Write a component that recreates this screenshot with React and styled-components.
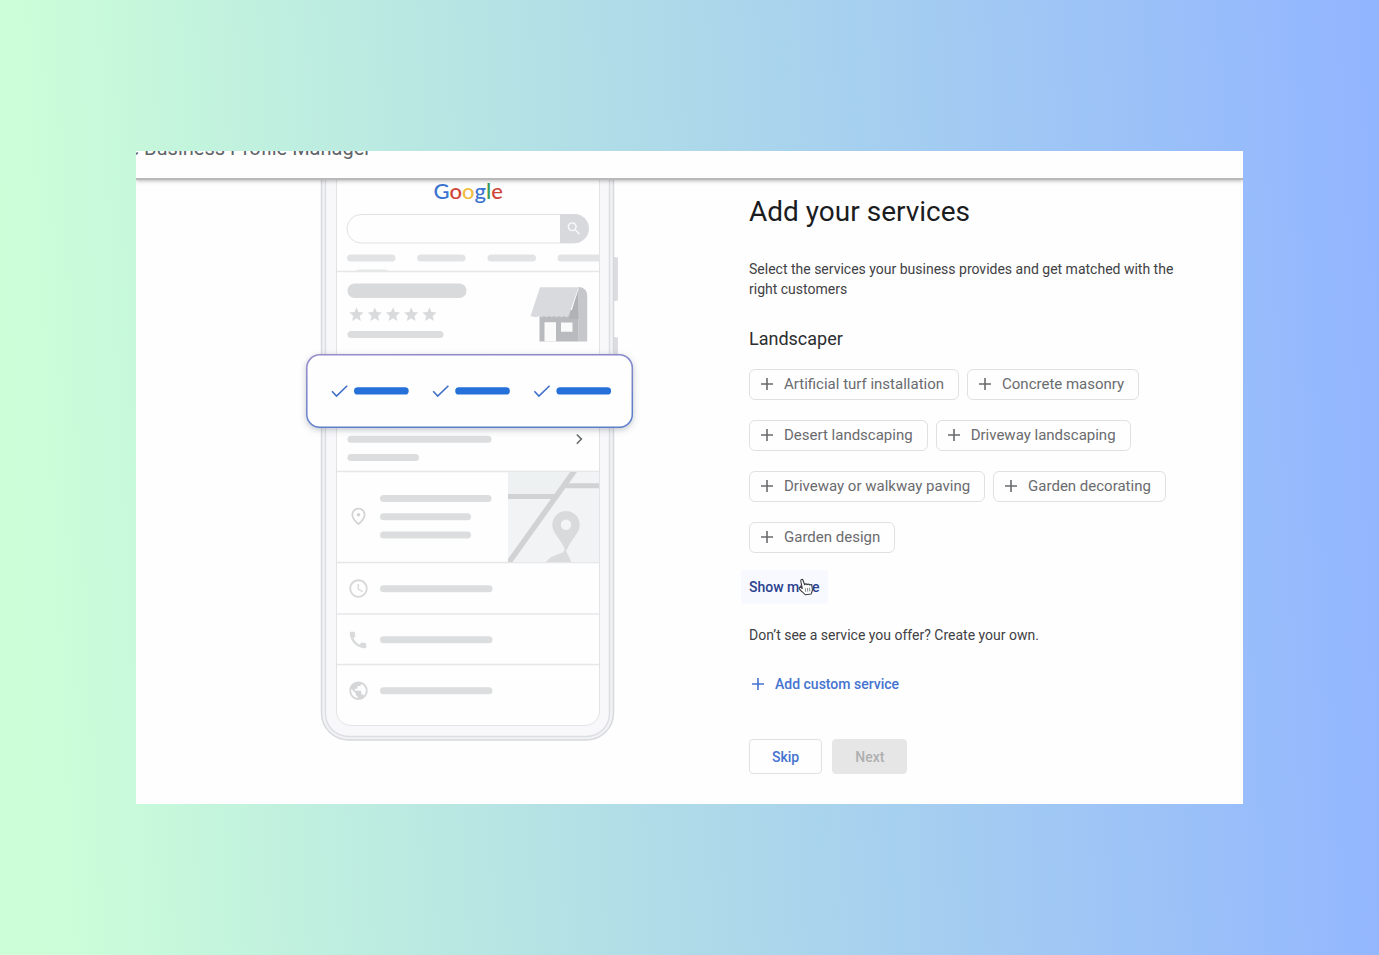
import React from "react";
import styled, { createGlobalStyle, css } from "styled-components";
import { MdPublic, MdCall, MdAccessTime, MdOutlinePlace, MdSearch, MdStar } from "react-icons/md";

const GlobalStyle = createGlobalStyle`
  *, *::before, *::after { box-sizing: border-box; }
  body { margin: 0; font-family: Roboto, "Liberation Sans", sans-serif; }
  button { font: inherit; }
`;

const Page = styled.div`
  min-height: 100vh;
  display: flex;
  align-items: center;
  justify-content: center;
  padding: 32px 136px;
  background: linear-gradient(87deg, #ccffd8 0%, #ccffd8 3%, #b0dde7 45%, #92b5ff 99%);
`;

const Frame = styled.div`
  width: 100%;
  display: flex;
  flex-direction: column;
  overflow: hidden;
  background: #fefefe;
`;

const Header = styled.header`
  position: relative;
  z-index: 1;
  height: 29px;
  display: flex;
  align-items: flex-start;
  background: #fefefe;
  border-bottom: 2px solid #b9b9b9;
  box-shadow: 0 1px 4px rgba(0, 0, 0, 0.28);
`;

const Brand = styled.div`
  margin: -15px 0 0 -60px;
  font-size: 20px;
  line-height: 24px;
  color: #5f6368;
  white-space: nowrap;
`;

const Body = styled.main`
  display: grid;
  grid-template-columns: minmax(0, 1fr) 494px;
`;

const Preview = styled.aside`
  display: flex;
  justify-content: center;
  align-items: flex-start;
  padding-left: 54px;
`;

const Art = styled.svg`
  display: block;
  width: 340px;
  height: 572px;
`;

const Panel = styled.section`
  display: flex;
  flex-direction: column;
  align-items: flex-start;
  padding: 14px 56px 30px 0;
`;

const Title = styled.h1`
  margin: 0;
  font-size: 28px;
  line-height: 36px;
  font-weight: 400;
  color: #1b1c1e;
`;

const Text = styled.p`
  margin: 0;
  font-size: 14px;
  line-height: 20px;
  color: #3f4144;
`;

const Intro = styled(Text)`
  margin-top: 29px;
`;

const Category = styled.h2`
  margin: 28px 0 18px;
  font-size: 18px;
  line-height: 24px;
  font-weight: 400;
  color: #2c2d30;
`;

const ChipList = styled.ul`
  display: flex;
  flex-wrap: wrap;
  gap: 20px 8px;
  width: 100%;
  margin: 0;
  padding: 0;
  list-style: none;
`;

const Chip = styled.button`
  display: flex;
  align-items: center;
  gap: 10px;
  height: 31px;
  padding: 0 14px 1px 10px;
  border: 1px solid #dfe0e2;
  border-radius: 6px;
  background: transparent;
  color: #6a6b6e;
  font-size: 15px;
  line-height: 20px;
  white-space: nowrap;
`;

const PlusMark = styled.svg`
  width: 14px;
  height: 14px;
  flex: none;
  fill: none;
  stroke: currentColor;
  stroke-width: 1.6;
`;

const textButton = css`
  display: flex;
  align-items: center;
  border: 0;
  background: transparent;
  font-size: 14px;
  line-height: 20px;
  font-weight: 500;
`;

const ShowMore = styled.button`
  ${textButton}
  position: relative;
  height: 34px;
  margin: 17px 0 21px -8px;
  padding: 0 8px;
  border-radius: 4px;
  background: #f8f9fe;
  color: #2a4190;
`;

const Pointer = styled.svg`
  position: absolute;
  left: 57px;
  top: 8px;
  width: 16px;
  height: 18px;
`;

const AddCustom = styled.button`
  ${textButton}
  gap: 10px;
  height: 34px;
  margin: 22px 0 38px;
  padding: 0 2px;
  color: #4573cf;
`;

const Actions = styled.div`
  display: flex;
  gap: 10px;
`;

const Action = styled.button`
  height: 35px;
  padding: 0 22px;
  border: 1px solid ${(p) => (p.disabled ? "#e6e6e6" : "#dfe1e5")};
  border-radius: 4px;
  background: ${(p) => (p.disabled ? "#e6e6e6" : "transparent")};
  color: ${(p) => (p.disabled ? "#aeafb0" : "#4573cf")};
  font-size: 14px;
  line-height: 20px;
  font-weight: 500;
`;

const services = [
  "Artificial turf installation",
  "Concrete masonry",
  "Desert landscaping",
  "Driveway landscaping",
  "Driveway or walkway paving",
  "Garden decorating",
  "Garden design",
];

const Plus = () => (
  <PlusMark viewBox="0 0 14 14" aria-hidden="true">
    <path d="M7 1v12M1 7h12" />
  </PlusMark>
);

const Pill = ({ x, y, w, h = 7, fill = "#dcddde" }) => (
  <rect x={x} y={y} width={w} height={h} rx={h / 2} fill={fill} />
);

function PhoneIllustration() {
  return (
    <Art viewBox="300 180 340 572" role="img" aria-label="Business profile preview on a phone">
      <defs>
        <clipPath id="screen">
          <rect x="337" y="140" width="262" height="585" rx="14" />
        </clipPath>
        <clipPath id="map">
          <rect x="508" y="472" width="91" height="90" />
        </clipPath>
        <linearGradient id="cardEdge" x1="0" y1="0" x2="0.3" y2="1">
          <stop offset="0" stopColor="#9a8ccb" />
          <stop offset="1" stopColor="#5c7ecb" />
        </linearGradient>
        <filter id="cardShadow" x="-10%" y="-30%" width="120%" height="170%">
          <feDropShadow dx="0" dy="2" stdDeviation="3" floodColor="#5f6b7c" floodOpacity="0.38" />
        </filter>
      </defs>

      <rect x="612" y="257" width="6" height="44" rx="2" fill="#dcdde0" />
      <rect x="612" y="337" width="6" height="44" rx="2" fill="#dcdde0" />
      <rect x="321.5" y="130" width="292" height="610" rx="27" fill="#f1f2f4" stroke="#d7d8dc" strokeWidth="1.4" />
      <rect x="325.5" y="130" width="284" height="606.5" rx="23" fill="#f8f8fa" stroke="#dddee2" strokeWidth="1.4" />
      <rect x="336.5" y="130" width="263" height="595.5" rx="14" fill="#fefefe" stroke="#e2e3e6" />

      <text x="433.5" y="199" fontFamily="Lato, sans-serif" fontSize="22" fontWeight="500">
        <tspan fill="#3b74d0">G</tspan>
        <tspan fill="#cf4436">o</tspan>
        <tspan fill="#efbd3f">o</tspan>
        <tspan fill="#3b74d0">g</tspan>
        <tspan fill="#3c9a55">l</tspan>
        <tspan fill="#cf4436">e</tspan>
      </text>

      <rect x="347" y="214.5" width="241" height="28.5" rx="14.2" fill="#fefefe" stroke="#e1e2e4" />
      <path d="M560 214h14.5a14.5 14.5 0 0 1 0 29H560z" fill="#d8d9dc" />
      <MdSearch x={565.5} y={220} size={17} color="#fafafa" />

      <g clipPath="url(#screen)">
        <Pill x={347} y={254.5} w={48.5} fill="#e2e3e4" />
        <Pill x={417} y={254.5} w={48.5} fill="#e2e3e4" />
        <Pill x={487.5} y={254.5} w={48.5} fill="#e2e3e4" />
        <Pill x={557.5} y={254.5} w={52} fill="#e2e3e4" />
        <path d="M355 271.500q1-2 4-2h26q3 0 4 2z" fill="#e6e7e8" />
        <path
          d="M337 271.500h262M337 471.500h262M337 562.500h262M337 614h262M337 664.500h262"
          stroke="#e6e7e9"
          strokeWidth="1.4"
        />
      </g>

      <Pill x={347.5} y={283.5} w={119} h={14.5} fill="#d9dadb" />
      {[356.5, 374.8, 393, 411.2, 429.5].map((cx) => (
        <MdStar key={cx} x={cx - 8.5} y={306} size={17} color="#d9dadc" />
      ))}
      <Pill x={347.5} y={331} w={96} />

      <path d="M539.500 310h39v31.500h-39z" fill="#b9babd" />
      <path d="M578.500 287h1a8 8 0 0 1 7.700 8v46.500h-9z" fill="#c6c7ca" />
      <path d="M578.500 289v30h-9.500z" fill="#b1b2b5" />
      <path
        d="M540 287.300h38.500l-10 29-2 1-2.500-1.200-2.500 1.200-2.500-1.200-2.500 1.200-2.500-1.200-2.500 1.200-2.500-1.200-2.500 1.200-2.500-1.200-2.500 1.200-2.500-1.200-2.500 1.200-6-1z"
        fill="#d9dadd"
      />
      <path d="M544.500 322.300H556v19.200h-11.500zM561 322.600h11.500v9.200H561z" fill="#fafafb" />

      <rect
        x="306.800"
        y="354.800"
        width="325.500"
        height="72.500"
        rx="13"
        fill="#fefefe"
        stroke="url(#cardEdge)"
        strokeWidth="1.5"
        filter="url(#cardShadow)"
      />
      {[0, 101.2, 202.4].map((dx) => (
        <g key={dx} transform={`translate(${dx} 0)`}>
          <path d="M332 391.300l4.500 4.800 10.700-10.400" fill="none" stroke="#4170c8" strokeWidth="1.6" />
          <Pill x={354} y={387.2} w={54.7} h={7.4} fill="#2571d9" />
        </g>
      ))}

      <Pill x={347.5} y={435.7} w={144} />
      <path d="M576.800 434.500l4.600 4.600-4.600 4.600" fill="none" stroke="#6b6c6e" strokeWidth="1.6" />
      <Pill x={347.5} y={454} w={71.5} />

      <g clipPath="url(#map)">
        <rect x="508" y="472" width="91" height="90" fill="#f2f3f5" />
        <path d="M508 472h64l-19 26h-45z" fill="#edf1f2" />
        <path d="M508 496.500h46M566 485.800h34" stroke="#d1d2d4" strokeWidth="5" />
        <path d="M507 565L575 470" stroke="#d1d2d4" strokeWidth="5.5" />
        <path d="M546 562q4-6 17-9.500l2.500-4.500 1 4 5 10z" fill="#dadbdd" />
        <path
          d="M566 511a13.700 13.700 0 0 1 13.700 13.700c0 8.500-8.500 14-12.700 25h-2c-4.200-11-12.700-16.500-12.700-25A13.700 13.700 0 0 1 566 511z"
          fill="#d9dadc"
        />
        <circle cx="566" cy="524.800" r="5.200" fill="#f4f5f6" />
      </g>

      <MdOutlinePlace x={348} y={506} size={21} color="#d2d3d5" />
      <Pill x={380} y={495} w={111.5} />
      <Pill x={380} y={513.3} w={91} />
      <Pill x={380} y={531.5} w={91} />
      <MdAccessTime x={347.5} y={577.5} size={22} color="#d7d8da" />
      <Pill x={380} y={585.3} w={112.5} />
      <MdCall x={347} y={629} size={22} color="#d9dadb" />
      <Pill x={380} y={636.3} w={112.5} />
      <MdPublic x={347.5} y={679.7} size={22} color="#d5d6d8" />
      <Pill x={380} y={687.3} w={112.5} />
    </Art>
  );
}

export default function App() {
  return (
    <>
      <GlobalStyle />
      <Page>
        <Frame>
          <Header>
            <Brand>Google Business Profile Manager</Brand>
          </Header>
          <Body>
            <Preview>
              <PhoneIllustration />
            </Preview>
            <Panel>
              <Title>Add your services</Title>
              <Intro>
                Select the services your business provides and get matched with the right customers
              </Intro>
              <Category>Landscaper</Category>
              <ChipList>
                {services.map((name) => (
                  <li key={name}>
                    <Chip type="button">
                      <Plus />
                      {name}
                    </Chip>
                  </li>
                ))}
              </ChipList>
              <ShowMore type="button">
                Show more
                <Pointer viewBox="0 0 16 18" aria-hidden="true">
                  <path
                    d="M4.300 10.500L2.800 3.200C2.500 1.300 4.500.700 5.100 2.500l1.500 4.300c.5-1.200 2-1.200 2.500-.100.600-.900 2-.800 2.400.300.900-.600 2.200-.100 2.400 1l.500 3.700c.100 1.600-.900 2.400-1.200 4.300l-6 .800C6 15 3.800 14 1.500 11.200c-1-1.500.500-2.600 1.600-1.700z"
                    fill="#fff"
                    stroke="#3c3d42"
                    strokeWidth="1.1"
                    strokeLinejoin="round"
                  />
                  <path
                    d="M7.300 10.300l.4 3.500M9.400 10l.4 3.600M11.500 9.800l.3 3.500"
                    stroke="#6a6b70"
                    strokeWidth=".8"
                  />
                </Pointer>
              </ShowMore>
              <Text>Don’t see a service you offer? Create your own.</Text>
              <AddCustom type="button">
                <Plus />
                Add custom service
              </AddCustom>
              <Actions>
                <Action type="button">Skip</Action>
                <Action type="button" disabled>
                  Next
                </Action>
              </Actions>
            </Panel>
          </Body>
        </Frame>
      </Page>
    </>
  );
}
